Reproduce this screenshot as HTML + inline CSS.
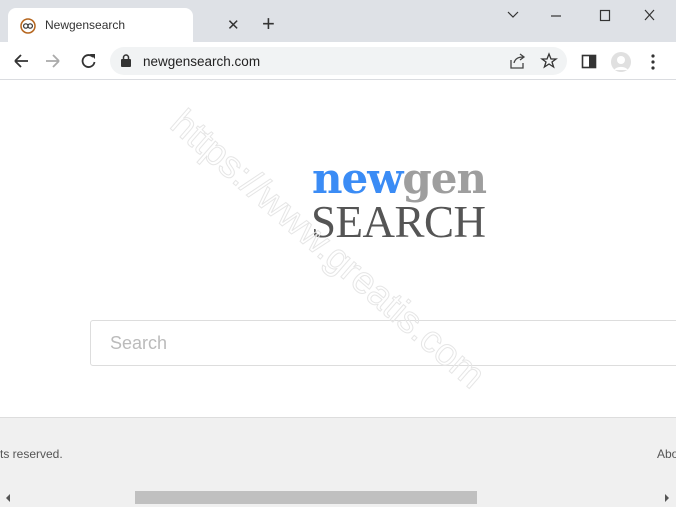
<!DOCTYPE html>
<html><head><meta charset="utf-8"><style>
*{margin:0;padding:0;box-sizing:border-box}
body{width:676px;height:507px;overflow:hidden;position:relative;font-family:"Liberation Sans",sans-serif;background:#fff}
.abs{position:absolute}
</style></head><body>
<div class="abs" style="left:0;top:0;width:676px;height:42px;background:#dee1e6"></div>
<div class="abs" style="left:8px;top:8px;width:185px;height:36px;background:#fff;border-radius:8px 8px 0 0"></div>
<svg class="abs" style="left:20px;top:18px" width="16" height="16" viewBox="0 0 16 16"><circle cx="8" cy="8" r="7" fill="none" stroke="#b5651d" stroke-width="1.5"/><circle cx="5.8" cy="8" r="2.2" fill="none" stroke="#333" stroke-width="1.2"/><circle cx="10.2" cy="8" r="2.2" fill="none" stroke="#333" stroke-width="1.2"/></svg>
<div class="abs" style="left:45px;top:18px;font-size:12px;color:#333">Newgensearch</div>
<div class="abs" style="left:227px;top:16px;font-size:15px;color:#333">✕</div>
<div class="abs" style="left:262px;top:11px;font-size:22px;color:#333">+</div>
<svg class="abs" style="left:500px;top:6px" width="170" height="20" viewBox="0 0 170 20"><path d="M8 6l5 5 5-5" fill="none" stroke="#333" stroke-width="1.2"/><path d="M51 10h10" stroke="#333" stroke-width="1.2"/><rect x="100.5" y="4.5" width="9" height="10" fill="none" stroke="#333" stroke-width="1.2"/><path d="M145 4l9 10M154 4l-9 10" stroke="#333" stroke-width="1.2"/></svg>
<div class="abs" style="left:0;top:42px;width:676px;height:38px;background:#fff;border-bottom:1px solid #dadce0"></div>
<svg class="abs" style="left:12px;top:51px" width="90" height="20" viewBox="0 0 90 20"><path d="M3 10h13M3 10l6-6M3 10l6 6" fill="none" stroke="#333" stroke-width="1.8"/><path d="M34 10h13M47 10l-6-6M47 10l-6 6" fill="none" stroke="#aaa" stroke-width="1.8"/><path d="M81 6a6 6 0 1 0 1.5 5" fill="none" stroke="#333" stroke-width="1.8"/><path d="M78 3h5v5z" fill="#333"/></svg>
<div class="abs" style="left:110px;top:47px;width:457px;height:28px;background:#f1f3f4;border-radius:14px"></div>
<svg class="abs" style="left:121px;top:54px" width="10" height="13" viewBox="0 0 10 13"><rect x="0" y="5" width="10" height="8" rx="1" fill="#333"/><path d="M2.5 5V3.5a2.5 2.5 0 0 1 5 0V5" fill="none" stroke="#333" stroke-width="1.5"/></svg>
<div class="abs" style="left:143px;top:54px;font-size:13.5px;color:#222">newgensearch.com</div>
<svg class="abs" style="left:508px;top:52px" width="50" height="18" viewBox="0 0 50 18"><path d="M3 8v8h12v-5M6 11c1-4 4-6 9-6M12 2l4 3-4 3" fill="none" stroke="#444" stroke-width="1.3"/><path d="M41 2l2 5h5l-4 3 1.6 5-4.6-3-4.6 3 1.6-5-4-3h5z" fill="none" stroke="#333" stroke-width="1.3"/></svg>
<svg class="abs" style="left:580px;top:52px" width="85" height="20" viewBox="0 0 85 20"><rect x="2.5" y="3.5" width="13" height="12" fill="none" stroke="#333" stroke-width="1.6"/><rect x="9" y="3" width="7" height="13" fill="#333"/><circle cx="41" cy="10" r="10" fill="#e0e0e0"/><circle cx="41" cy="8" r="4" fill="#fff"/><path d="M34 18a8 6 0 0 1 14 0" fill="#fff"/><circle cx="73" cy="4" r="1.6" fill="#333"/><circle cx="73" cy="10" r="1.6" fill="#333"/><circle cx="73" cy="16" r="1.6" fill="#333"/></svg>
<div class="abs" style="left:312px;top:156px;font-family:'DejaVu Serif','Liberation Serif',serif;font-weight:bold;font-size:42px;letter-spacing:-1px;line-height:46px"><span style="color:#3b8cf5">new</span><span style="color:#9e9e9e">gen</span></div>
<div class="abs" style="left:311px;top:200px;font-family:'Liberation Serif',serif;font-size:45px;color:#555;line-height:44px;letter-spacing:-0.5px">SEARCH</div>
<div class="abs" style="left:90px;top:320px;width:600px;height:46px;border:1px solid #ddd;border-radius:3px;background:#fff"></div>
<div class="abs" style="left:110px;top:333px;font-size:18px;color:#bbb">Search</div>
<div class="abs" style="transform:rotate(41deg);transform-origin:0 0;font-size:38px;color:transparent;-webkit-text-stroke:1px #e6e6e6;white-space:nowrap;left:190px;top:102px">https://www.greatis.com</div>
<div class="abs" style="left:0;top:417px;width:676px;height:90px;background:#f0f0f0;border-top:1px solid #ddd"></div>
<div class="abs" style="left:0;top:447px;font-size:12px;color:#555">ts reserved.</div>
<div class="abs" style="left:657px;top:447px;font-size:12px;color:#555">Abo</div>
<div class="abs" style="left:135px;top:491px;width:342px;height:13px;background:#c0c0c0"></div>
<div class="abs" style="left:6px;top:494px;width:0;height:0;border-top:4px solid transparent;border-bottom:4px solid transparent;border-right:4px solid #555"></div>
<div class="abs" style="left:665px;top:494px;width:0;height:0;border-top:4px solid transparent;border-bottom:4px solid transparent;border-left:4px solid #555"></div>
</body></html>
